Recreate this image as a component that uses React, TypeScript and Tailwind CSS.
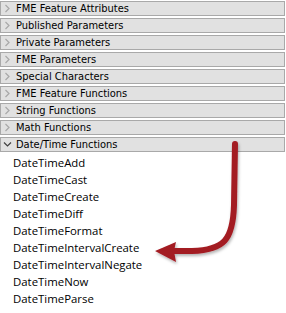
import React from "react";

const headers = [
  "FME Feature Attributes",
  "Published Parameters",
  "Private Parameters",
  "FME Parameters",
  "Special Characters",
  "FME Feature Functions",
  "String Functions",
  "Math Functions",
  "Date/Time Functions",
];

const items = [
  "DateTimeAdd",
  "DateTimeCast",
  "DateTimeCreate",
  "DateTimeDiff",
  "DateTimeFormat",
  "DateTimeIntervalCreate",
  "DateTimeIntervalNegate",
  "DateTimeNow",
  "DateTimeParse",
];

function Chevron({ open }: { open: boolean }) {
  return open ? (
    <svg width="9" height="9" viewBox="0 0 9 9" className="shrink-0">
      <path d="M1 2.5 L4.5 6 L8 2.5" fill="none" stroke="#404040" strokeWidth="1.2" />
    </svg>
  ) : (
    <svg width="9" height="9" viewBox="0 0 9 9" className="shrink-0">
      <path d="M2.5 1 L6 4.5 L2.5 8" fill="none" stroke="#a8a8a8" strokeWidth="1.2" />
    </svg>
  );
}

export default function App() {
  return (
    <div className="relative w-[286px] h-[313px] bg-white overflow-hidden">
      <div className="flex flex-col gap-[2px] pt-[1px]">
        {headers.map((h, i) => (
          <div
            key={h}
            className="w-[285px] h-[15px] border border-[#a9a9a9] bg-[#e1e1e1] flex items-center pl-[2px] gap-[4px]"
          >
            <Chevron open={i === headers.length - 1} />
            <span
              className="text-[11px] leading-[13px] text-black whitespace-nowrap"
              style={{ fontFamily: "Tahoma, 'DejaVu Sans Condensed', 'Liberation Sans', sans-serif" }}
            >
              {h}
            </span>
          </div>
        ))}
      </div>
      <div className="flex flex-col mt-[2px] pl-[13px]">
        {items.map((t) => (
          <div
            key={t}
            className="h-[17px] leading-[17px] text-[11.4px] text-black whitespace-nowrap"
            style={{ fontFamily: "'Open Sans', 'Noto Sans', sans-serif" }}
          >
            {t}
          </div>
        ))}
      </div>
      <svg
        className="absolute left-0 top-0 pointer-events-none"
        width="286"
        height="313"
        viewBox="0 0 286 313"
      >
        <defs>
          <filter id="sh" x="-20%" y="-20%" width="140%" height="140%">
            <feDropShadow dx="1" dy="2" stdDeviation="1.5" floodColor="#000" floodOpacity="0.3" />
          </filter>
        </defs>
        <g filter="url(#sh)">
          <path
            d="M235 144 L234 205 C233 240 224 250 192 251 L172 251"
            fill="none"
            stroke="#a31b24"
            strokeWidth="6"
            strokeLinecap="round"
          />
          <polygon points="155,251 176,242 174,251 176,262" fill="#a31b24" />
        </g>
      </svg>
    </div>
  );
}
